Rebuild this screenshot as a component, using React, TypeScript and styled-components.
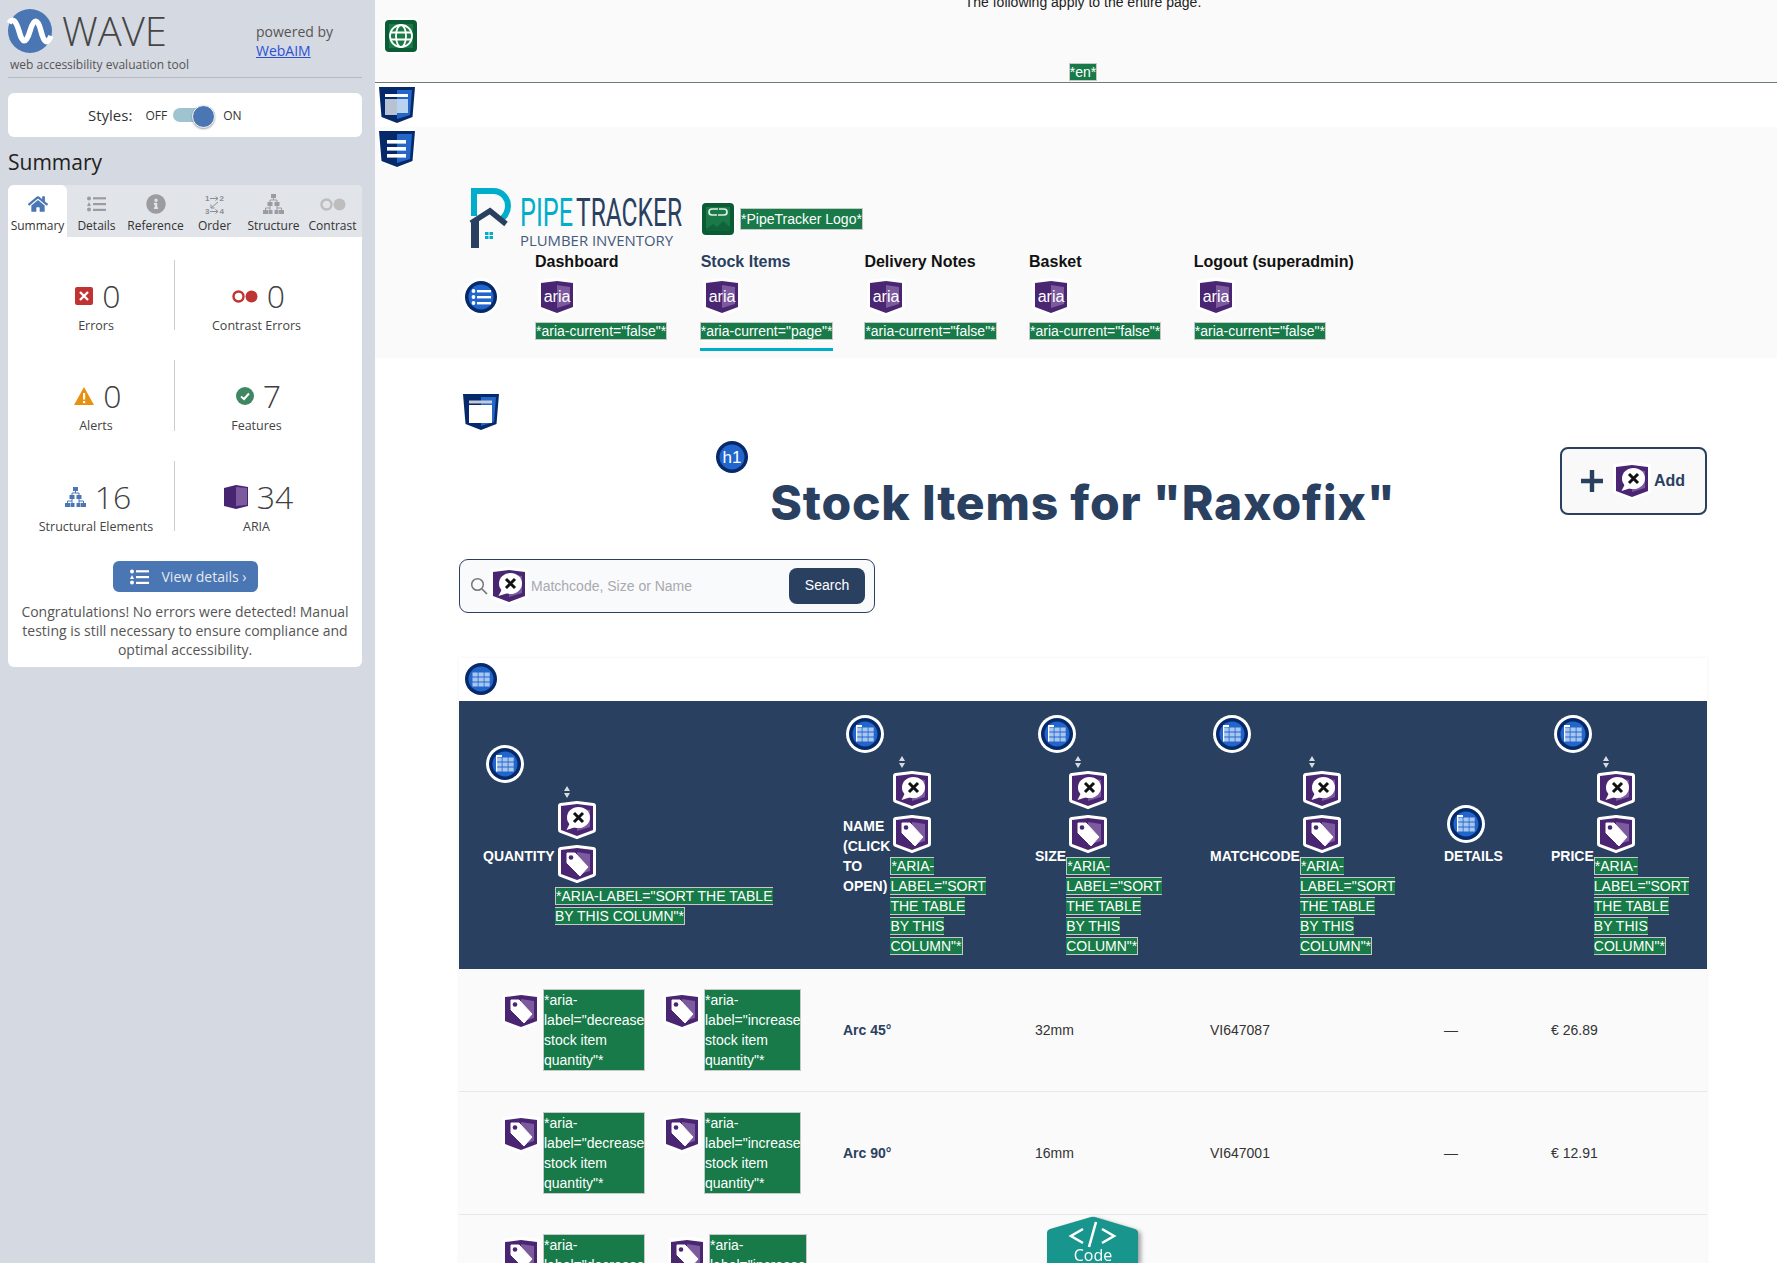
import React from 'react'
import styled, { createGlobalStyle } from 'styled-components'
import { FaHome, FaInfoCircle } from 'react-icons/fa'

const navy = '#2a4060'
const sans = '"Liberation Sans", Arial, sans-serif'
const open = '"Open Sans", "Noto Sans", sans-serif'

const GlobalStyle = createGlobalStyle`
  html, body {
    margin: 0;
    height: 1263px;
    overflow: hidden;
    background: #fff;
    font-family: ${sans};
  }
  * { box-sizing: border-box; }
`

const Page = styled.div`
  display: flex;
  width: 1777px;
  height: 1263px;
  overflow: hidden;
`

/* ---------- wave sidebar ---------- */

const Sidebar = styled.aside`
  flex: 0 0 375px;
  background: #d5d9e1;
  padding: 9px 13px 0 8px;
  font-family: ${open};
`

const BrandBar = styled.div`
  display: flex;
  height: 69px;
  border-bottom: 1px solid #b7babd;
`

const Brand = styled.div`
  width: 248px;
`

const BrandTop = styled.div`
  display: flex;
  align-items: center;
  gap: 10px;
  height: 44px;
`

const WaveWord = styled.div`
  font-size: 40px;
  font-weight: 300;
  color: #454545;
  line-height: 44px;
`

const Tagline = styled.div`
  margin: 4px 0 0 2px;
  font-size: 12px;
  line-height: 16px;
  color: #555;
`

const Powered = styled.div`
  padding-top: 13px;
  font-size: 14px;
  line-height: 19px;
  color: #555;

  a {
    color: #2b50d8;
    text-decoration: underline;
  }
`

const StylesCard = styled.div`
  display: flex;
  align-items: center;
  height: 44px;
  margin-top: 15px;
  padding-left: 80px;
  background: #fff;
  border-radius: 6px;
  color: #333;
`

const StylesName = styled.span`
  font-size: 15px;
  margin-right: 13px;
`

const StylesState = styled.span`
  font-size: 12px;
`

const Toggle = styled.span`
  position: relative;
  display: block;
  width: 42px;
  height: 14px;
  margin: 0 8px 0 6px;
  border-radius: 7px;
  background: #a0c4cf;

  &::after {
    content: '';
    position: absolute;
    right: 0;
    top: -3.5px;
    width: 21px;
    height: 21px;
    border-radius: 50%;
    background: #4a76b4;
    border: 1px solid #fff;
    box-shadow: 0 1px 2px rgba(0, 0, 0, 0.35);
  }
`

const PanelTitle = styled.h2`
  margin: 11px 0 9px;
  font-size: 21px;
  font-weight: 400;
  line-height: 28px;
  color: #222;
`

const Panel = styled.section`
  background: #fff;
  border-radius: 6px;
  padding-bottom: 8px;
`

const Tabs = styled.div`
  display: flex;
  height: 52px;
  background: #e1e4e9;
  border-radius: 6px 6px 0 0;
`

const Tab = styled.div<{ $active?: boolean }>`
  flex: 1;
  display: flex;
  flex-direction: column;
  align-items: center;
  padding-top: 8px;
  background: ${p => (p.$active ? '#fff' : 'transparent')};
  border-radius: 6px 6px 0 0;
  color: ${p => (p.$active ? '#4a76b4' : '#9a9ca0')};
`

const TabIcon = styled.div`
  height: 22px;
  display: flex;
  align-items: center;
  justify-content: center;
`

const TabName = styled.div`
  margin-top: 3px;
  font-size: 12px;
  line-height: 16px;
  white-space: nowrap;
  color: #333;
`

const Stats = styled.div`
  display: grid;
  grid-template-columns: 167px 163px;
  grid-template-rows: 70px 71px 70px;
  row-gap: 30px;
  padding-top: 23px;
`

const Stat = styled.div<{ $divider?: boolean }>`
  display: flex;
  flex-direction: column;
  align-items: center;
  padding: 19px 0 0 ${p => (p.$divider ? 10 : 0)}px;
  border-right: ${p => (p.$divider ? '1px solid #cdcdcd' : 'none')};
`

const StatTop = styled.div`
  display: flex;
  align-items: center;
  gap: 9px;
  height: 34px;
  padding-left: 4px;
`

const StatNumber = styled.span`
  font-size: 32px;
  font-weight: 300;
  line-height: 34px;
  color: #3f3f3f;
`

const StatName = styled.div`
  margin-top: 5px;
  font-size: 12.5px;
  line-height: 16px;
  color: #444;
  white-space: nowrap;
`

const DetailsButton = styled.div`
  display: flex;
  align-items: center;
  gap: 13px;
  width: 145px;
  height: 31px;
  margin: 30px auto 0;
  padding-left: 17px;
  background: #4a76b4;
  border-radius: 6px;
  font-size: 14px;
  color: #e4e9f2;
`

const Congrats = styled.p`
  margin: 10px 0 0;
  padding: 0 10px;
  font-size: 14px;
  line-height: 19px;
  text-align: center;
  color: #555;
`

/* ---------- page under test ---------- */

const Content = styled.main`
  position: relative;
  flex: 1;
  min-width: 0;
  overflow: hidden;
`

const LangBar = styled.div`
  display: flow-root;
  height: 83px;
  background: #fafafa;
  border-bottom: 1px solid #6f7c6f;
`

const LangNote = styled.div`
  margin-top: -6px;
  padding-left: 14px;
  font-size: 14px;
  line-height: 16px;
  text-align: center;
  color: #222;
`

const LangIconRow = styled.div`
  margin: 7px 0 0 7px;
  height: 38px;
`

const LangCode = styled.div`
  margin-top: 7px;
  padding-left: 14px;
  line-height: 20px;
  font-size: 14px;
  text-align: center;
`

const Tag = styled.span`
  background: #177a48;
  color: #fff;
  border: 1px solid #c8c8c8;
  font-size: 14px;
  font-weight: 400;
`

const TopBand = styled.div`
  height: 44px;
  padding: 3px 0 0 3px;
  background: #fff;
`

const SiteHeader = styled.header`
  padding: 3px 0 7px 3px;
  background: #fafafa;
`

const LogoRow = styled.div`
  display: flex;
  align-items: center;
  gap: 16px;
  margin: 20px 0 0 93px;
  height: 62px;
`

const LogoLabel = styled.div`
  display: flex;
  align-items: center;
  gap: 3px;
  line-height: 20px;
`

const NavRow = styled.nav`
  display: flex;
  margin: 2px 0 0 84px;
`

const NavMarker = styled.div`
  flex: 0 0 38px;
  margin: 26px 35px 0 0;
`

const NavItem = styled.div`
  flex: 0 0 164.7px;
`

const NavInner = styled.div<{ $active?: boolean }>`
  display: inline-flex;
  flex-direction: column;
  padding-bottom: 7px;
  border-bottom: 3px solid ${p => (p.$active ? '#00aecb' : 'transparent')};
`

const NavLink = styled.div<{ $active?: boolean }>`
  padding-left: ${p => (p.$active ? 1 : 0)}px;
  font-size: 16px;
  font-weight: 700;
  line-height: 20px;
  color: ${p => (p.$active ? navy : '#111')};
`

const NavIcon = styled.div`
  margin: 6px 0 5px 3px;
  height: 38px;
`

const NavTagLine = styled.div`
  line-height: 20px;
  font-size: 14px;
  white-space: nowrap;
`

const MainArea = styled.div`
  padding: 35px 70px 0 84px;
  background: #fff;
`

const MainMarker = styled.div`
  height: 38px;
  margin-left: 3px;
`

const TitleRow = styled.div`
  display: grid;
  grid-template-columns: 1fr 741px 1fr;
  margin-top: 7px;
`

const TitleBlock = styled.div`
  grid-column: 2;
`

const Title = styled.h1`
  margin: -2px 0 2px;
  font-family: Inter, ${sans};
  font-size: 48px;
  font-weight: 800;
  letter-spacing: 0.8px;
  line-height: 57px;
  text-align: center;
  color: ${navy};
  white-space: nowrap;
`

const AddButton = styled.div`
  grid-column: 3;
  justify-self: end;
  display: flex;
  align-items: center;
  width: 147px;
  height: 68px;
  margin-top: 9px;
  padding-left: 19px;
  border: 2px solid ${navy};
  border-radius: 8px;
  background: #f9f9f9;
  font-size: 16px;
  font-weight: 700;
  color: ${navy};
`

const AddIcon = styled.div`
  margin-left: 10px;
`

const AddText = styled.span`
  margin-left: 3px;
`

const SearchBox = styled.div`
  display: flex;
  align-items: center;
  width: 416px;
  height: 54px;
  margin-top: 26px;
  padding: 0 9px 0 10px;
  border: 1px solid ${navy};
  border-radius: 9px;
  background: #f9fafc;
`

const SearchIcon = styled.div`
  margin-left: 2px;
`

const SearchHint = styled.span`
  flex: 1;
  margin-left: 3px;
  font-size: 14px;
  color: #a9a9ae;
`

const SearchButton = styled.div`
  width: 76px;
  height: 36px;
  border-radius: 8px;
  background: ${navy};
  color: #fff;
  font-size: 14px;
  line-height: 35px;
  text-align: center;
`

const TableCard = styled.div`
  margin-top: 45px;
  background: #fff;
  box-shadow: 0 0 4px rgba(0, 0, 0, 0.06);
`

const TableMarker = styled.div`
  height: 43px;
  padding: 2px 0 0 3px;
`

const StockTable = styled.table`
  width: 1248px;
  table-layout: fixed;
  border-collapse: collapse;
  font-size: 14px;
`

const HeadCell = styled.th<{ $w: number }>`
  width: ${p => p.$w}px;
  height: 268px;
  padding: 1px 0 0 24px;
  background: ${navy};
  color: #fff;
  text-align: left;
  vertical-align: middle;
  text-transform: uppercase;
  font-size: 14px;
  font-weight: 700;
  line-height: 20px;
`

const HeadMarker = styled.div`
  height: 38px;
  margin: 0 0 3px 3px;
`

const HeadBody = styled.div`
  display: flex;
  align-items: center;
`

const HeadName = styled.div<{ $w: number }>`
  flex: 0 0 ${p => p.$w}px;
`

const SortColumn = styled.div<{ $w: number }>`
  flex: 0 0 ${p => p.$w}px;
`

const SortArrow = styled.div`
  height: 12px;
  margin: 0 0 3px 9px;
`

const HeadIcon = styled.div`
  height: 38px;
  margin: 0 0 6px 3px;
`

const HeadTagLines = styled.div`
  margin-top: -3px;
`

const Row = styled.tr`
  background: #fafafa;
  border-bottom: 1px solid #e7e7e7;
`

const BodyCell = styled.td<{ $strong?: boolean }>`
  height: 122.5px;
  padding: 0 0 0 24px;
  vertical-align: middle;
  font-weight: ${p => (p.$strong ? 700 : 400)};
  color: ${p => (p.$strong ? navy : '#333')};
`

const QtyCell = styled.td`
  height: 122.5px;
  padding: 0 0 0 43px;
  vertical-align: middle;
`

const QtyPairs = styled.div`
  display: flex;
`

const QtyPair = styled.div<{ $gap?: number }>`
  display: flex;
  align-items: flex-start;
  gap: 3px;
  margin-left: ${p => p.$gap ?? 0}px;
`

const QtyIcon = styled.div`
  height: 38px;
  margin-top: 3px;
`

const QtyTag = styled.div<{ $w: number }>`
  width: ${p => p.$w}px;
  background: #177a48;
  border: 1px solid #c8c8c8;
  color: #fff;
  font-size: 14px;
  line-height: 20px;
`

const CodeTab = styled.div`
  position: absolute;
  left: 672px;
  bottom: 0;
  width: 100px;
  height: 46px;
  filter: drop-shadow(3px 2px 2px rgba(0, 0, 0, 0.35));
`

/* ---------- drawn icons ---------- */

const IconSvg = styled.svg`
  display: block;
  overflow: visible;
`

const Wave = ({ children }: { children: React.ReactNode }) => (
  <IconSvg width={38} height={38} viewBox="0 0 38 38">{children}</IconSvg>
)

const Landmark = ({ kind }: { kind: 'band' | 'nav' | 'main' }) => (
  <Wave>
    <path d="M1 1 H37 L34.5 31 L19 37 L3.5 31 Z" fill="#06296a" stroke="#fff" strokeWidth={3} strokeLinejoin="round" paintOrder="stroke" />
    <path d="M19 4 H34 L32 29 L19 33 Z" fill="#2566c9" />
    {kind === 'band' && (
      <>
        <rect x="7" y="8" width="23" height="3" fill="#fff" />
        <rect x="7" y="13" width="12" height="16" fill="#b7c2d2" />
        <rect x="19" y="13" width="11" height="14" fill="#b9d2f0" />
      </>
    )}
    {kind === 'nav' && (
      <>
        <rect x="9" y="10" width="19" height="3.6" fill="#fff" />
        <rect x="9" y="17" width="19" height="3.6" fill="#fff" />
        <rect x="9" y="24" width="19" height="3.6" fill="#fff" />
      </>
    )}
    {kind === 'main' && (
      <>
        <rect x="7" y="7.5" width="23" height="3" fill="#c4cad6" />
        <rect x="7" y="12" width="23" height="18" fill="#fff" />
      </>
    )}
  </Wave>
)

const ariaOuter = 'M3 5 L19 3 L35 5 V29 L19 35 L3 29 Z'

const AriaBase = ({ children }: { children: React.ReactNode }) => (
  <Wave>
    <path d={ariaOuter} fill="#4a2572" stroke="#fff" strokeWidth={6} strokeLinejoin="round" paintOrder="stroke" />
    <path d="M19 7 L32 9 V26 L19 30 Z" fill="#7c5a9e" />
    {children}
  </Wave>
)

const AriaText = () => (
  <AriaBase>
    <text x="19" y="24" textAnchor="middle" fill="#fff" fontSize="16" fontFamily={sans}>aria</text>
  </AriaBase>
)

const AriaCross = () => (
  <AriaBase>
    <ellipse cx="20.5" cy="16.5" rx="11.5" ry="10.5" fill="#fff" />
    <path d="M12 22 L8.5 29 L18 26 Z" fill="#fff" />
    <path d="M16 12 L25 21 M25 12 L16 21" stroke="#111" strokeWidth="3" />
  </AriaBase>
)

const AriaTag = () => (
  <AriaBase>
    <path d="M9 8 H17 L30 22 L22 31 L9 18 Z" fill="#fff" stroke="#fff" strokeLinejoin="round" />
    <circle cx="13" cy="12.5" r="2.3" fill="#4a2572" />
  </AriaBase>
)

const RoundBase = ({ children }: { children: React.ReactNode }) => (
  <Wave>
    <circle cx="19" cy="19" r="19" fill="#fff" />
    <circle cx="19" cy="19" r="16" fill="#06296a" />
    <circle cx="19" cy="19" r="12.5" fill="#2266cc" />
    {children}
  </Wave>
)

const RoundList = () => (
  <RoundBase>
    {[12, 18, 24].map(y => (
      <g key={y}>
        <circle cx="11.5" cy={y + 1} r="1.9" fill="#fff" />
        <rect x="15" y={y} width="14" height="2.4" fill="#fff" />
      </g>
    ))}
  </RoundBase>
)

const RoundTable = ({ header }: { header?: boolean }) => (
  <RoundBase>
    {[10.5, 16.5, 22.5].map(x => [12.5, 17.5, 22.5].map(y => (
      <rect key={`${x}-${y}`} x={x} y={y} width="5.2" height="4" fill="#a9c6ee" />
    )))}
    {header && <rect x="10" y="10" width="6" height="2" fill="#fff" />}
    {header && <rect x="10" y="12" width="1.2" height="14.5" fill="#fff" />}
  </RoundBase>
)

const RoundHeading = () => (
  <RoundBase>
    <text x="19" y="25" textAnchor="middle" fill="#fff" fontSize="17" fontFamily={sans}>h1</text>
  </RoundBase>
)

const GreenBase = ({ children }: { children: React.ReactNode }) => (
  <Wave>
    <rect x="1" y="1" width="36" height="36" rx="6" fill="#fff" />
    <rect x="3" y="3" width="32" height="32" rx="4" fill="#0b5c34" />
    <rect x="7" y="7" width="24" height="24" fill="#1a7a47" />
    {children}
  </Wave>
)

const GreenGlobe = () => (
  <GreenBase>
    <g fill="none" stroke="#fff" strokeWidth="1.8">
      <circle cx="19" cy="19" r="11" />
      <ellipse cx="19" cy="19" rx="5" ry="11" />
      <path d="M8 15.5 H30 M8 22.5 H30" />
    </g>
  </GreenBase>
)

const GreenImageLink = () => (
  <GreenBase>
    <path d="M7 31 V29 L14 24 L18 27 L24 21 L31 27 V31 Z" fill="#10643c" />
    <g fill="none" stroke="#dfeee6" strokeWidth="1.7">
      <path d="M18 15 H13 A3 3 0 0 1 13 9 H19" />
      <path d="M20 9 H25 A3 3 0 0 1 25 15 H19" />
    </g>
  </GreenBase>
)

const PipeLogo = () => (
  <IconSvg width={212} height={62} viewBox="0 0 212 62">
    <path d="M3 28 V3 H22 C32 3 37 11 37 18 C37 24 34 28 31 31" fill="none" stroke="#00aecb" strokeWidth="6" />
    <path d="M0 35 L19 23 L35 36" fill="none" stroke={navy} strokeWidth="5.5" />
    <path d="M0 35 L8 31 V60 H0 Z" fill={navy} />
    <g fill="#00aecb">
      <rect x="14" y="44" width="3.5" height="3" />
      <rect x="18.5" y="44" width="3.5" height="3" />
      <rect x="14" y="48" width="3.5" height="3" />
      <rect x="18.5" y="48" width="3.5" height="3" />
    </g>
    <text x="49" y="38" fontSize="38" fontFamily="Roboto, sans-serif" fill="#00aecb" textLength="53" lengthAdjust="spacingAndGlyphs">PIPE</text>
    <text x="105" y="38" fontSize="38" fontFamily="Roboto, sans-serif" fill={navy} textLength="106" lengthAdjust="spacingAndGlyphs">TRACKER</text>
    <text x="49" y="58" fontSize="15" fontFamily={open} fill="#45597a" textLength="153" lengthAdjust="spacingAndGlyphs">PLUMBER INVENTORY</text>
  </IconSvg>
)

const BrandMark = () => (
  <IconSvg width={44} height={44} viewBox="0 0 44 44">
    <circle cx="22" cy="22" r="22" fill="#4a76b4" />
    <path d="M1 14 C5 8 8 12 11 22 C14 34 18 36 22 22 C26 8 30 10 33 22 C36 34 39 36 43 27" fill="none" stroke="#fff" strokeWidth="5.5" />
  </IconSvg>
)

const ListGlyph = ({ color }: { color: string }) => (
  <IconSvg width={19} height={16} viewBox="0 0 19 16">
    <circle cx="2" cy="2.5" r="2" fill={color} />
    <path d="M0 10 L2 6 L4 10 Z" fill={color} />
    <circle cx="2" cy="13.5" r="2" fill={color} />
    <rect x="6" y="1.2" width="13" height="2.2" fill={color} />
    <rect x="6" y="7" width="13" height="2.2" fill={color} />
    <rect x="6" y="12.8" width="13" height="2.2" fill={color} />
  </IconSvg>
)

const OrderGlyph = () => (
  <IconSvg width={20} height={21} viewBox="0 0 20 21">
    <g fontSize="8" fontFamily={sans} fontWeight="700" fill="#8c8e92">
      <text x="0" y="7">1</text>
      <text x="14.5" y="7">2</text>
      <text x="0" y="20">3</text>
      <text x="14.5" y="20">4</text>
    </g>
    <path d="M5 4.5 H13 M10.5 2.5 L13 4.5 L10.5 6.5 M5 17.5 H13 M10.5 15.5 L13 17.5 L10.5 19.5 M13 8 L6 14 M6 10.5 V14 H9.5" fill="none" stroke="#8c8e92" strokeWidth="1" />
  </IconSvg>
)

const TreeGlyph = ({ color }: { color: string }) => (
  <IconSvg width={21} height={20} viewBox="0 0 21 20">
    <g fill={color}>
      <rect x="8" y="0" width="5" height="4" />
      <rect x="4.5" y="8" width="5" height="4" />
      <rect x="11.5" y="8" width="5" height="4" />
      <rect x="0" y="16" width="5" height="4" />
      <rect x="5.5" y="16" width="4" height="4" />
      <rect x="11.5" y="16" width="4" height="4" />
      <rect x="16" y="16" width="5" height="4" />
    </g>
    <path d="M10.5 4 V6 H7 V8 M10.5 6 H14 V8 M7 12 V14 H2.5 V16 M7 14 V16 M14 12 V14 H18.5 V16 M14 14 V16" fill="none" stroke={color} strokeWidth="1" />
  </IconSvg>
)

const ContrastGlyph = ({ ring, dot }: { ring: string; dot: string }) => (
  <IconSvg width={26} height={13} viewBox="0 0 26 13">
    <circle cx="6.5" cy="6.5" r="5" fill="none" stroke={ring} strokeWidth="2.4" />
    <circle cx="19.5" cy="6.5" r="6" fill={dot} />
  </IconSvg>
)

const ErrorGlyph = () => (
  <IconSvg width={18} height={18} viewBox="0 0 18 18">
    <rect width="18" height="18" rx="2" fill="#c03333" />
    <path d="M5 5 L13 13 M13 5 L5 13" stroke="#fff" strokeWidth="2.4" />
  </IconSvg>
)

const AlertGlyph = () => (
  <IconSvg width={20} height={18} viewBox="0 0 20 18">
    <path d="M10 0 L20 18 H0 Z" fill="#e8900f" />
    <rect x="9" y="6" width="2.2" height="6.5" fill="#fff" />
    <rect x="9" y="14" width="2.2" height="2.2" fill="#fff" />
  </IconSvg>
)

const FeatureGlyph = () => (
  <IconSvg width={18} height={18} viewBox="0 0 18 18">
    <circle cx="9" cy="9" r="9" fill="#3e8762" />
    <path d="M5 9.5 L8 12 L13 6.5" fill="none" stroke="#fff" strokeWidth="2" />
  </IconSvg>
)

const AriaBook = () => (
  <IconSvg width={24} height={24} viewBox="0 0 24 24">
    <path d="M0 3 L12 0 L24 2 V21 L12 24 L0 21 Z" fill="#472571" />
    <path d="M12 2 L23 3 V20 L12 21 Z" fill="#7c5a9e" />
  </IconSvg>
)

const SearchGlyph = () => (
  <IconSvg width={18} height={18} viewBox="0 0 18 18">
    <circle cx="7.5" cy="7.5" r="5.8" fill="none" stroke="#777" strokeWidth="1.5" />
    <path d="M12 12 L17 17" stroke="#777" strokeWidth="1.7" />
  </IconSvg>
)

const PlusGlyph = () => (
  <IconSvg width={22} height={22} viewBox="0 0 22 22">
    <path d="M0 11 H22 M11 0 V22" stroke={navy} strokeWidth="4.4" />
  </IconSvg>
)

const SortGlyph = () => (
  <IconSvg width={6} height={12} viewBox="0 0 6 12">
    <path d="M3 0 L6 5 H0 Z M3 12 L0 7 H6 Z" fill="#d6dbe2" />
  </IconSvg>
)

/* ---------- data ---------- */

const tabs = [
  { name: 'Summary', icon: <FaHome size={20} color="#4a76b4" />, active: true },
  { name: 'Details', icon: <ListGlyph color="#9a9ca0" /> },
  { name: 'Reference', icon: <FaInfoCircle size={20} color="#9a9ca0" /> },
  { name: 'Order', icon: <OrderGlyph /> },
  { name: 'Structure', icon: <TreeGlyph color="#9a9ca0" /> },
  { name: 'Contrast', icon: <ContrastGlyph ring="#bdbdbd" dot="#bdbdbd" /> },
]

const stats = [
  { name: 'Errors', value: '0', icon: <ErrorGlyph /> },
  { name: 'Contrast Errors', value: '0', icon: <ContrastGlyph ring="#c03333" dot="#c03333" /> },
  { name: 'Alerts', value: '0', icon: <AlertGlyph /> },
  { name: 'Features', value: '7', icon: <FeatureGlyph /> },
  { name: 'Structural Elements', value: '16', icon: <TreeGlyph color="#4a76b4" /> },
  { name: 'ARIA', value: '34', icon: <AriaBook /> },
]

const navItems = [
  { name: 'Dashboard', current: 'false' },
  { name: 'Stock Items', current: 'page' },
  { name: 'Delivery Notes', current: 'false' },
  { name: 'Basket', current: 'false' },
  { name: 'Logout (superadmin)', current: 'false' },
]

const sortLabel = '*aria-label="sort the table by this column"*'

const columns = [
  { name: 'Quantity', width: 360, nameWidth: 72, sortWidth: 218 },
  { name: 'Name (click to open)', width: 192, nameWidth: 47, sortWidth: 97 },
  { name: 'Size', width: 175, nameWidth: 30, sortWidth: 97 },
  { name: 'Matchcode', width: 234, nameWidth: 89, sortWidth: 97 },
  { name: 'Details', width: 107, nameWidth: 59 },
  { name: 'Price', width: 180, nameWidth: 42, sortWidth: 97 },
]

const rows = [
  { name: 'Arc 45°', size: '32mm', code: 'VI647087', price: '€ 26.89', gap: 18, width: 97 },
  { name: 'Arc 90°', size: '16mm', code: 'VI647001', price: '€ 12.91', gap: 18, width: 97 },
  { name: '', size: '', code: '', price: '', gap: 23, width: 98 },
]

const App: React.FC = () => {
  return (
    <Page>
      <GlobalStyle />
      <Sidebar>
        <BrandBar>
          <Brand>
            <BrandTop>
              <BrandMark />
              <WaveWord>WAVE</WaveWord>
            </BrandTop>
            <Tagline>web accessibility evaluation tool</Tagline>
          </Brand>
          <Powered>
            powered by<br />
            <a href="#webaim">WebAIM</a>
          </Powered>
        </BrandBar>

        <StylesCard>
          <StylesName>Styles:</StylesName>
          <StylesState>OFF</StylesState>
          <Toggle />
          <StylesState>ON</StylesState>
        </StylesCard>

        <PanelTitle>Summary</PanelTitle>

        <Panel>
          <Tabs>
            {tabs.map(tab => (
              <Tab key={tab.name} $active={tab.active}>
                <TabIcon>{tab.icon}</TabIcon>
                <TabName>{tab.name}</TabName>
              </Tab>
            ))}
          </Tabs>

          <Stats>
            {stats.map((stat, i) => (
              <Stat key={stat.name} $divider={i % 2 === 0}>
                <StatTop>
                  {stat.icon}
                  <StatNumber>{stat.value}</StatNumber>
                </StatTop>
                <StatName>{stat.name}</StatName>
              </Stat>
            ))}
          </Stats>

          <DetailsButton>
            <ListGlyph color="#fff" />
            View details ›
          </DetailsButton>

          <Congrats>
            Congratulations! No errors were detected! Manual testing is still necessary to ensure compliance and optimal accessibility.
          </Congrats>
        </Panel>
      </Sidebar>

      <Content>
        <LangBar>
          <LangNote>The following apply to the entire page.</LangNote>
          <LangIconRow><GreenGlobe /></LangIconRow>
          <LangCode><Tag>*en*</Tag></LangCode>
        </LangBar>

        <TopBand><Landmark kind="band" /></TopBand>

        <SiteHeader>
          <Landmark kind="nav" />
          <LogoRow>
            <PipeLogo />
            <LogoLabel>
              <GreenImageLink />
              <Tag>*PipeTracker Logo*</Tag>
            </LogoLabel>
          </LogoRow>
          <NavRow>
            <NavMarker><RoundList /></NavMarker>
            {navItems.map(item => {
              const active = item.current === 'page'
              return (
                <NavItem key={item.name}>
                  <NavInner $active={active}>
                    <NavLink $active={active}>{item.name}</NavLink>
                    <NavIcon><AriaText /></NavIcon>
                    <NavTagLine><Tag>*aria-current="{item.current}"*</Tag></NavTagLine>
                  </NavInner>
                </NavItem>
              )
            })}
          </NavRow>
        </SiteHeader>

        <MainArea>
          <MainMarker><Landmark kind="main" /></MainMarker>

          <TitleRow>
            <TitleBlock>
              <RoundHeading />
              <Title>Stock Items for "Raxofix"</Title>
            </TitleBlock>
            <AddButton>
              <PlusGlyph />
              <AddIcon><AriaCross /></AddIcon>
              <AddText>Add</AddText>
            </AddButton>
          </TitleRow>

          <SearchBox>
            <SearchGlyph />
            <SearchIcon><AriaCross /></SearchIcon>
            <SearchHint>Matchcode, Size or Name</SearchHint>
            <SearchButton>Search</SearchButton>
          </SearchBox>

          <TableCard>
            <TableMarker><RoundTable /></TableMarker>
            <StockTable>
              <thead>
                <tr>
                  {columns.map(col => (
                    <HeadCell key={col.name} $w={col.width}>
                      <HeadMarker><RoundTable header /></HeadMarker>
                      <HeadBody>
                        <HeadName $w={col.nameWidth}>{col.name}</HeadName>
                        {col.sortWidth && (
                          <SortColumn $w={col.sortWidth}>
                            <SortArrow><SortGlyph /></SortArrow>
                            <HeadIcon><AriaCross /></HeadIcon>
                            <HeadIcon><AriaTag /></HeadIcon>
                            <HeadTagLines><Tag>{sortLabel}</Tag></HeadTagLines>
                          </SortColumn>
                        )}
                      </HeadBody>
                    </HeadCell>
                  ))}
                </tr>
              </thead>
              <tbody>
                {rows.map((row, i) => (
                  <Row key={i}>
                    <QtyCell>
                      <QtyPairs>
                        <QtyPair>
                          <QtyIcon><AriaTag /></QtyIcon>
                          <QtyTag $w={102}>*aria-label="decrease stock item quantity"*</QtyTag>
                        </QtyPair>
                        <QtyPair $gap={row.gap}>
                          <QtyIcon><AriaTag /></QtyIcon>
                          <QtyTag $w={row.width}>*aria-label="increase stock item quantity"*</QtyTag>
                        </QtyPair>
                      </QtyPairs>
                    </QtyCell>
                    <BodyCell $strong>{row.name}</BodyCell>
                    <BodyCell>{row.size}</BodyCell>
                    <BodyCell>{row.code}</BodyCell>
                    <BodyCell>{row.name && '—'}</BodyCell>
                    <BodyCell>{row.price}</BodyCell>
                  </Row>
                ))}
              </tbody>
            </StockTable>
          </TableCard>
        </MainArea>

        <CodeTab>
          <IconSvg width={91} height={46} viewBox="0 0 91 46">
            <path d="M0 16 Q0 13 3 12 L44 0 Q46 -0.5 48 0 L88 12 Q91 13 91 16 V46 H0 Z" fill="#18958c" />
            <path d="M36 12 L24 19 L36 26 M55 12 L67 19 L55 26 M49 5 L42 30" fill="none" stroke="#fff" strokeWidth="2.6" />
            <text x="46" y="44" textAnchor="middle" fill="#fff" fontSize="16" fontFamily={open}>Code</text>
          </IconSvg>
        </CodeTab>
      </Content>
    </Page>
  )
}

export default App
